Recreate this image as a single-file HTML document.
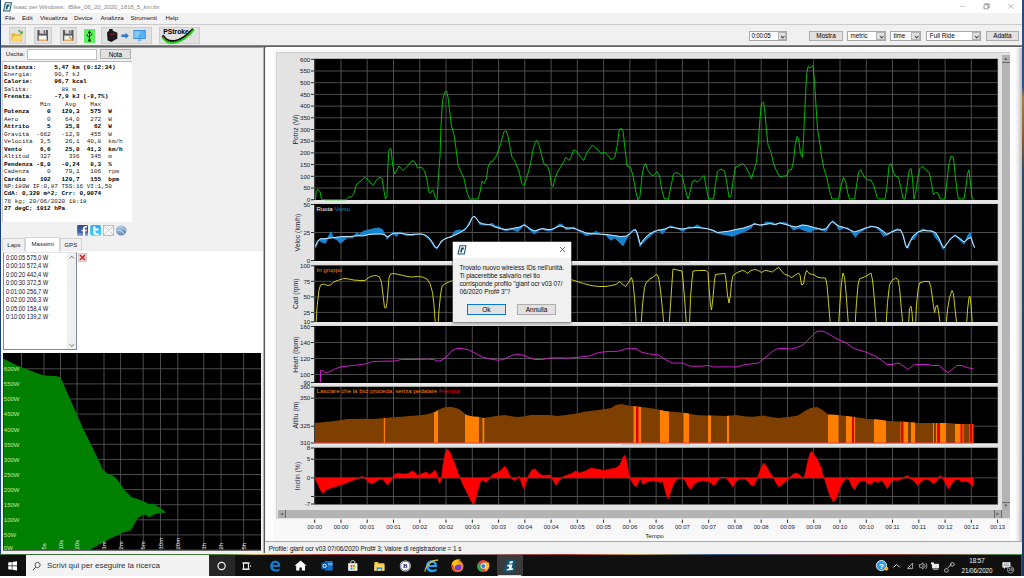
<!DOCTYPE html>
<html><head><meta charset="utf-8"><title>Isaac per Windows</title>
<style>
html,body{margin:0;padding:0}
body{width:1024px;height:578px;overflow:hidden;position:relative;background:#f0f0f0;font-family:"Liberation Sans",sans-serif;font-size:6.4px;color:#000}
.a{position:absolute}
.ax{font-family:"Liberation Sans",sans-serif;font-size:6.2px;fill:#1a1a2a}
.xl{font-family:"Liberation Sans",sans-serif;font-size:5.9px;fill:#1a1a3a}
.lg{font-family:"Liberation Sans",sans-serif;font-size:6.1px}
.at{font-family:"Liberation Sans",sans-serif;font-size:6.8px;fill:#1a1a3a}
.pl{font-family:"Liberation Sans",sans-serif;font-size:6px}
svg.chart{position:absolute;left:0;top:0}
svg.pc{position:absolute;left:0;top:352px}
.btn{position:absolute;background:#e1e1e1;border:0.6px solid #cdcdcd;box-sizing:border-box}
.mi{position:absolute;top:14.4px;font-size:6.15px;color:#1a1020}
pre{margin:0;font-family:"Liberation Mono",monospace;font-size:6px;line-height:7.467px;position:absolute;left:3.9px;top:63.5px;color:#222}
pre b{color:#000}
.li{position:absolute;left:6px;font-size:6.7px;transform:scaleX(.86);transform-origin:0 0;color:#10102a;white-space:pre}
.cb{position:absolute;background:#fff;border:0.6px solid #a8a8a8;box-sizing:border-box;height:9.6px;top:31.2px;font-size:6.3px;line-height:8.2px;padding-left:2.4px}
.cb i{position:absolute;right:0;top:0;bottom:0;width:8.4px;background:#e0e0e0;border:0.5px solid #b4b4b4;box-sizing:border-box}
.cb i:after{content:"";position:absolute;left:2.4px;top:1.8px;width:2.4px;height:2.4px;border-right:0.7px solid #444;border-bottom:0.7px solid #444;transform:rotate(45deg)}
.tb{position:absolute;top:555.1px;left:0;width:1022px;height:20.5px;background:#101010}
.tray{position:absolute;color:#f4f4f4;font-size:6.3px;letter-spacing:-0.05px;text-align:center}
</style></head><body>
<!-- desktop slivers -->
<div class="a" style="left:0;top:0;width:1.2px;height:555px;background:#1c3f7a"></div>
<div class="a" style="left:1022px;top:0;width:2px;height:578px;background:linear-gradient(#244a86 0,#2a5290 15%,#b07a3a 17%,#8a5a2a 24%,#2a4a70 30%,#1c3a66 100%)"></div>
<!-- title bar -->
<div class="a" style="left:1.2px;top:0;width:1020.8px;height:12.6px;background:#fff"></div>
<svg class="a" style="left:3px;top:1.5px" width="9" height="10" viewBox="0 0 9 10"><path d="M2.4 0.8H8.4L6.8 9H0.6Z" fill="#fff" stroke="#1d5672" stroke-width="1.1"/><path d="M3.6 2.4H6.6L6.2 4.4H5L4.4 7.4H2.6L3.2 4.4H3.2Z" fill="#1d5672"/></svg>
<div class="a" style="left:13.2px;top:2.8px;font-size:6.2px;letter-spacing:-0.135px;color:#8a8a8a;white-space:pre">Isaac per Windows:  iBike_06_20_2020_1818_5_km.ibr</div>
<svg class="a" style="left:950px;top:0" width="72" height="13" viewBox="950 0 72 13"><path d="M959.800 6.400H964.800" stroke="#aaa" stroke-width="0.600"/><path d="M984 4.800h4v4h-4zM985.200 4.800V3.700h4v4h-1.200" stroke="#777" stroke-width="0.700" fill="none"/><path d="M1008.400 3.900l4.800 4.800M1013.200 3.900l-4.800 4.800" stroke="#888" stroke-width="0.600"/></svg>
<!-- menu bar -->
<div class="a" style="left:1.2px;top:12.6px;width:1020.8px;height:11.2px;background:#f2f2f2"></div>
<span class="mi" style="left:5px">File</span><span class="mi" style="left:22px">Edit</span><span class="mi" style="left:40px">Visualizza</span><span class="mi" style="left:74px">Device</span><span class="mi" style="left:100.5px">Analizza</span><span class="mi" style="left:130.5px">Strumenti</span><span class="mi" style="left:165.5px">Help</span>
<div class="a" style="left:1px;top:24px;width:1021px;height:1px;background:#cacaca"></div>
<!-- toolbar -->
<div class="btn" style="left:8.5px;top:26.8px;width:17.5px;height:17.6px"></div>
<div class="btn" style="left:34px;top:26.8px;width:17.5px;height:17.6px"></div>
<div class="btn" style="left:59.5px;top:26.8px;width:17.5px;height:17.6px"></div>
<div class="btn" style="left:100.6px;top:26.8px;width:51px;height:17.6px"></div>
<div class="btn" style="left:159.4px;top:26.8px;width:40.4px;height:17.6px"></div>
<div class="a" style="left:84px;top:29px;width:11px;height:13.8px;background:#5cf05c"></div>
<svg class="a" style="left:0;top:24px" width="210" height="22" viewBox="0 24 210 22">
<!-- folder -->
<path d="M11.5 33.2h3.2l1 1h6.3v7.4H11.5z" fill="#e8b83a"/><path d="M11.5 41.6l2-5.6h9.6l-2.6 5.6z" fill="#fbd968"/><path d="M18 31.4h3.4l-0.6-1.6 3 2.4-3 2.4 0.6-1.6H18z" fill="#4cae3c" transform="rotate(35 21 32)"/>
<!-- save -->
<path d="M37.4 30h10.6v10.8H37.4z" fill="#5a5a5e"/><rect x="39.6" y="30" width="6.2" height="3.6" fill="#d8d8dc"/><rect x="43.6" y="30.5" width="1.4" height="2.6" fill="#5a5a5e"/><rect x="38.8" y="35.6" width="7.8" height="5.2" fill="#f4f4f4"/><rect x="38.8" y="39.6" width="7.8" height="1.2" fill="#f0a040"/>
<!-- save as -->
<path d="M62.9 30h10.6v10.8H62.9z" fill="#5a5a5e"/><rect x="65.1" y="30" width="6.2" height="3.6" fill="#d8d8dc"/><rect x="69.1" y="30.5" width="1.4" height="2.6" fill="#5a5a5e"/><rect x="64.3" y="35.6" width="7.8" height="5.2" fill="#f4f4f4"/><rect x="64.3" y="39.6" width="7.8" height="1.2" fill="#f0a040"/><path d="M69 36.5l4 4" stroke="#d89030" stroke-width="1.3"/>
<!-- usb -->
<path d="M89.5 30.6v9.4M89.5 31l-1.2 1.8h2.4zM89.5 37.6l-2.3-1.8v-1.6M89.5 36.4l2.3-1.6v-1.4" stroke="#0a2a0a" stroke-width="0.9" fill="none"/><circle cx="89.5" cy="40.4" r="1.3" fill="#0a2a0a"/>
<!-- device -->
<path d="M107 32.6l2-1.800 0.200-1.800h3.400l0.200 1.800 4.600 2v5.800l-6 3.300-3.800-1.500z" fill="#1a1a1c"/><path d="M109.8 34.6l5.6-0.8" stroke="#c02030" stroke-width="0.8"/>
<path d="M121.4 34.6h4v-1.8l3.6 3-3.6 3v-1.8h-4z" fill="#2a78e0"/>
<rect x="133.4" y="30" width="12.4" height="9" fill="#3a8ee0"/><path d="M134.4 31h10.4v7h-10.4z" fill="#5ab0f4"/><path d="M134.4 31h6l-3 7h-3z" fill="#9ad4fa" opacity=".7"/><path d="M138.4 39h2.4l1 2.2h-4.4z" fill="#7ab8ee"/>
<!-- pstroke -->
<path d="M162.600 35.400c5 9 17 8.600 30.600-6.400" stroke="#101010" stroke-width="2.600" fill="none"/>
<path d="M162.400 37.200c5.600 9 18.600 8 31.600-7.600" stroke="#10d810" stroke-width="1.900" fill="none"/>
<path d="M163 36.400c5 8.400 17.400 8 30.400-7.200" stroke="#ff5a5a" stroke-width="1" stroke-dasharray="0.9 1.700" fill="none"/>
<text x="163.2" y="34.3" font-family="Liberation Sans,sans-serif" font-size="6.8" font-weight="bold" fill="#000">PStroke</text>
</svg>
<div class="a" style="left:1.2px;top:45.4px;width:1020.8px;height:2.4px;background:linear-gradient(#d0d0d0,#5a5a5a 25%,#6a6a6a 65%,#d0d0d0)"></div>
<!-- right toolbar controls -->
<div class="cb" style="left:749px;width:38.4px;padding-left:1.6px;letter-spacing:-0.3px">0:00:05<i></i></div>
<div class="btn" style="left:809.2px;top:31.2px;width:33.6px;height:9.8px;font-size:6.4px;line-height:8.6px;text-align:center;border-color:#adadad">Mostra</div>
<div class="cb" style="left:847.2px;width:38.6px">metric<i></i></div>
<div class="cb" style="left:890px;width:30.6px">time<i></i></div>
<div class="cb" style="left:926.4px;width:54.6px">Full Ride<i></i></div>
<div class="btn" style="left:985.6px;top:31.2px;width:33.6px;height:9.8px;font-size:6.4px;line-height:8.6px;text-align:center;border-color:#adadad">Adatta</div>
<!-- left pane -->
<div class="a" style="left:5.7px;top:50px;font-size:6.2px;color:#222">Uscita:</div>
<div class="a" style="left:26.8px;top:48.8px;width:70.6px;height:10.8px;background:#fff;border:0.6px solid #c0c0c0;box-sizing:border-box"></div>
<div class="btn" style="left:100.2px;top:48.6px;width:30.4px;height:10.6px;font-size:6.4px;line-height:9.4px;text-align:center;border-color:#adadad">Nota</div>
<div class="a" style="left:2px;top:61.4px;width:130px;height:161px;background:#fff;border-top:0.8px solid #b8b8b8;border-left:0.8px solid #c8c8c8;box-sizing:border-box"></div>
<pre><b>Distanza:     5,47 km (0:12:34)</b>
Energia:      90,7 kJ
<b>Calorie:      96,7 kcal</b>
Salita:         88 m
<b>Frenata:      -7,9 kJ (-8,7%)</b>
          Min    Avg    Max
<b>Potenza     0   120,3   575  W</b>
Aero        0    64,0   272  W
<b>Attrito     5    35,8    62  W</b>
Gravità  -662   -12,9   455  W
Velocità  3,5    26,1  40,8  km/h
<b>Vento     6,6    25,0  41,3  km/h</b>
Altitud   327     336   345  m
<b>Pendenza -8,0   -0,24   0,3  %</b>
Cadenza     0    79,1   106  rpm
<b>Cardio    102   120,7   155  bpm</b>
NP:180W IF:0,87 TSS:16 VI:1,50
<b>CdA: 0,320 m^2; Crr: 0,0074</b>
76 kg; 20/06/2020 18:18
<b>27 degC; 1012 hPa</b></pre>
<!-- social icons -->
<svg class="a" style="left:76px;top:224px" width="52" height="14" viewBox="76 224 52 14">
<defs><linearGradient id="fb" x1="0" y1="0" x2="0" y2="1"><stop offset="0" stop-color="#2f4b8c"/><stop offset=".72" stop-color="#4a66a8"/><stop offset=".74" stop-color="#6f88c6"/><stop offset="1" stop-color="#7a92cc"/></linearGradient>
<linearGradient id="tw" x1="0" y1="0" x2="0" y2="1"><stop offset="0" stop-color="#3aa8e8"/><stop offset="1" stop-color="#38d4f4"/></linearGradient>
<radialGradient id="gl" cx=".4" cy=".35" r=".7"><stop offset="0" stop-color="#9cc0e0"/><stop offset="1" stop-color="#5f86aa"/></radialGradient></defs>
<rect x="77.200" y="225" width="10.800" height="10.800" rx="1.200" fill="url(#fb)"/>
<path d="M83 235.800v-4.600h-1.400v-1.500h1.400v-1.100c0-1.700 1-2.600 2.500-2.600 0.600 0 1.200 0.050 1.500 0.100v1.500h-0.900c-0.800 0-1 0.400-1 0.950v1.150h1.800l-0.250 1.500h-1.550v4.600z" fill="#fff"/>
<rect x="90.200" y="225" width="10.800" height="10.800" rx="2" fill="url(#tw)"/>
<path d="M93.300 226.800c0-0.700 2.200-0.700 2.200 0v1.800h2.600c0.900 0 0.900 1.900 0 1.900h-2.600v1.600c0 1 0.500 1.300 1.300 1.300h1.300c0.900 0 0.900 1.900 0 1.900h-1.600c-2 0-3.200-1-3.200-3z" fill="#fff"/>
<rect x="103.400" y="225.600" width="10.200" height="9.800" fill="#fbfbfb" stroke="#a4a4a4" stroke-width="0.700"/><path d="M103.600 226l4.900 4.600 4.900-4.600M103.600 235.200l3.700-3.900M113.400 235.200l-3.700-3.900" stroke="#a8a8a8" stroke-width="0.700" fill="none"/>
<circle cx="121.200" cy="230.400" r="5.200" fill="url(#gl)"/><path d="M116.800 228.200c2.600-2.400 6-1 9.200 2.600M116.200 231c2.800-1.800 5.600-0.400 8 3.200M119 225.800c2.600-0.600 5 0.400 6.800 2.400" stroke="#e4eef8" stroke-width="0.900" fill="none" opacity=".85"/>
</svg>
<!-- tabs -->
<div class="a" style="left:1.2px;top:251.2px;width:262.2px;height:102px;background:#fff"></div>
<div class="a" style="left:2.4px;top:238.4px;width:23px;height:13px;border:0.6px solid #d4d4d4;border-bottom:none;box-sizing:border-box;font-size:6.1px;line-height:12.8px;text-align:center;color:#222">Laps</div>
<div class="a" style="left:60px;top:238.4px;width:21.6px;height:13px;border:0.6px solid #d4d4d4;border-bottom:none;box-sizing:border-box;font-size:6.1px;line-height:12.8px;text-align:center;color:#222">GPS</div>
<div class="a" style="left:24.8px;top:237.2px;width:35.6px;height:14.6px;background:#fff;border:0.6px solid #d4d4d4;border-bottom:none;box-sizing:border-box;font-size:6.1px;line-height:12.4px;text-align:center;color:#222">Massimi</div>
<!-- listbox -->
<div class="a" style="left:2.6px;top:252.4px;width:74px;height:97.6px;background:#fff;border:0.7px solid #7a8a9a;border-top:0.5px solid #e0e4e8;box-sizing:border-box"></div>
<div class="a" style="left:67.4px;top:253px;width:8.6px;height:96.4px;background:#f0f0f0"></div>
<svg class="a" style="left:67px;top:253px" width="10" height="97" viewBox="0 0 10 97"><path d="M2.6 5.4l2.2-2.2 2.2 2.2M2.6 91.2l2.2 2.2 2.2-2.2" stroke="#505050" stroke-width="0.8" fill="none"/></svg>
<div class="li" style="top:254px">0:00:05 575,0 W</div>
<div class="li" style="top:262.45px">0:00:10 572,4 W</div>
<div class="li" style="top:270.9px">0:00:20 442,4 W</div>
<div class="li" style="top:279.35px">0:00:30 372,5 W</div>
<div class="li" style="top:287.8px">0:01:00 256,7 W</div>
<div class="li" style="top:296.25px">0:02:00 206,3 W</div>
<div class="li" style="top:304.7px">0:05:00 158,4 W</div>
<div class="li" style="top:313.15px">0:10:00 139,2 W</div>
<div class="btn" style="left:77.6px;top:252.6px;width:9px;height:9px;background:#e4e4e4"></div>
<svg class="a" style="left:77.6px;top:252.6px" width="9" height="9" viewBox="0 0 9 9"><path d="M2 2l5 5M7 2l-5 5" stroke="#e02020" stroke-width="1.6"/></svg>
<svg class="pc" width="262" height="200" viewBox="0 352 262 200">
<rect x="3" y="353" width="258" height="197.5" fill="#000"/>
<path d="M21.5 353V550M44.0 353V550M60.5 353V550M77.0 353V550M104.0 353V550M120.6 353V550M143.2 353V550M160.5 353V550M177.8 353V550M203.7 353V550M221.0 353V550M243.6 353V550M3 368.8H261M3 383.9H261M3 399.0H261M3 414.1H261M3 429.2H261M3 444.3H261M3 459.4H261M3 474.5H261M3 489.6H261M3 504.7H261M3 519.8H261M3 534.9H261M3 550.0H261" stroke="#585858" stroke-width="0.85" fill="none"/>
<path d="M3.3 358.6 L19.0 366.2 L42.9 375.3 L57.0 376.3 L60.6 377.6 L68.6 395.7 L76.2 412.9 L83.8 430.0 L93.7 450.0 L103.0 469.8 L106.9 473.2 L113.5 475.9 L117.4 479.6 L124.0 489.6 L131.9 497.5 L137.2 498.8 L143.8 501.5 L149.0 504.0 L153.0 503.6 L158.3 506.7 L162.3 509.4 L166.2 512.8 L161.0 512.8 L154.4 514.6 L149.0 517.3 L145.1 514.6 L141.2 516.0 L137.2 518.6 L134.6 523.9 L130.6 530.5 L124.0 532.3 L116.1 535.8 L105.5 541.0 L97.6 545.5 L89.7 550.0 L3.3 550.0 Z" fill="#008000"/>
<text x="3.8" y="371.1" class="pl" fill="#c8e890">600W</text>
<text x="3.8" y="386.2" class="pl" fill="#c8e890">550W</text>
<text x="3.8" y="401.3" class="pl" fill="#c8e890">500W</text>
<text x="3.8" y="416.4" class="pl" fill="#c8e890">450W</text>
<text x="3.8" y="431.5" class="pl" fill="#c8e890">400W</text>
<text x="3.8" y="446.6" class="pl" fill="#c8e890">350W</text>
<text x="3.8" y="461.7" class="pl" fill="#c8e890">300W</text>
<text x="3.8" y="476.8" class="pl" fill="#c8e890">250W</text>
<text x="3.8" y="491.9" class="pl" fill="#c8e890">200W</text>
<text x="3.8" y="507.0" class="pl" fill="#c8e890">150W</text>
<text x="3.8" y="522.1" class="pl" fill="#c8e890">100W</text>
<text x="3.8" y="537.2" class="pl" fill="#c8e890">50W</text>
<text x="3.8" y="549.5" class="pl" fill="#c8e890">0W</text>
<text transform="translate(46.2 549.5) rotate(-90)" class="pl" fill="#e8e8e8">5s</text>
<text transform="translate(62.7 549.5) rotate(-90)" class="pl" fill="#e8e8e8">10s</text>
<text transform="translate(79.2 549.5) rotate(-90)" class="pl" fill="#e8e8e8">20s</text>
<text transform="translate(106.2 549.5) rotate(-90)" class="pl" fill="#e8e8e8">1m</text>
<text transform="translate(122.8 549.5) rotate(-90)" class="pl" fill="#e8e8e8">2m</text>
<text transform="translate(145.4 549.5) rotate(-90)" class="pl" fill="#e8e8e8">5m</text>
<text transform="translate(162.7 549.5) rotate(-90)" class="pl" fill="#e8e8e8">10m</text>
<text transform="translate(180.0 549.5) rotate(-90)" class="pl" fill="#e8e8e8">20m</text>
<text transform="translate(205.9 549.5) rotate(-90)" class="pl" fill="#e8e8e8">1h</text>
<text transform="translate(223.2 549.5) rotate(-90)" class="pl" fill="#e8e8e8">2h</text>
<text transform="translate(245.8 549.5) rotate(-90)" class="pl" fill="#e8e8e8">5h</text>
</svg>
<!-- splitter -->
<div class="a" style="left:262.6px;top:47.4px;width:0.8px;height:506px;background:#b4b4b4"></div>
<div class="a" style="left:263.8px;top:47.4px;width:1.5px;height:506px;background:#5a5a5a"></div>
<!-- right pane -->
<div class="a" style="left:266px;top:47px;width:756px;height:495px;background:#fff"></div>
<div class="a" style="left:273px;top:49px;width:737px;height:492px;background:#f8f8f8"></div>
<div class="a" style="left:1015px;top:48px;width:7px;height:493px;background:linear-gradient(90deg,#fff,#e8e8e8 45%,#bcbcbc)"></div>
<div class="a" style="left:276px;top:52px;width:734px;height:467px;background:#e3e3e3;border-top:1px solid #cdcdcd;border-left:1px solid #d0d0d0;box-sizing:border-box"></div>
<!-- scrollbars -->
<div class="a" style="left:1002px;top:54.6px;width:7.6px;height:455.3px;background:#b4b4b4"></div>
<div class="a" style="left:1002px;top:54.6px;width:7.6px;height:8px;background:#b0b0b0;border-bottom:0.7px solid #6a6a6a;box-sizing:border-box"></div>
<div class="a" style="left:1002px;top:501.6px;width:7.6px;height:8px;background:#b0b0b0;border-top:0.7px solid #6a6a6a;box-sizing:border-box"></div>
<div class="a" style="left:278px;top:509.9px;width:731.6px;height:8px;background:#b4b4b4"></div>
<div class="a" style="left:278px;top:509.9px;width:8px;height:8px;background:#acacac;border-right:0.7px solid #6a6a6a;box-sizing:border-box"></div>
<div class="a" style="left:993.6px;top:509.9px;width:8.2px;height:8px;background:#acacac;border-left:0.7px solid #6a6a6a;border-right:0.7px solid #6a6a6a;box-sizing:border-box"></div>
<svg class="a" style="left:0;top:0;pointer-events:none" width="1024" height="578" viewBox="0 0 1024 578"><path d="M1004.4 60l1.4-2.8 1.4 2.8zM1004.4 504.4l1.4 2.8 1.4-2.8zM283.2 512.4l-2.8 1.5 2.8 1.5zM996.4 512.4l2.8 1.5-2.8 1.5z" fill="#606060"/></svg>
<svg class="chart" width="1024" height="578" viewBox="0 0 1024 578">
<rect x="314.0" y="58.8" width="684.0" height="141.4" fill="#000"/>
<rect x="314.0" y="204.0" width="684.0" height="57.0" fill="#000"/>
<rect x="314.0" y="265.2" width="684.0" height="57.0" fill="#000"/>
<rect x="314.0" y="326.0" width="684.0" height="57.0" fill="#000"/>
<rect x="314.0" y="386.5" width="684.0" height="57.0" fill="#000"/>
<rect x="314.0" y="447.5" width="684.0" height="57.0" fill="#000"/>
<defs><linearGradient id="sg" x1="0" y1="0" x2="0" y2="1"><stop offset="0" stop-color="#f2f2f2"/><stop offset="1" stop-color="#d6d6d6"/></linearGradient></defs>
<rect x="314.0" y="200.2" width="684.0" height="3.8" fill="url(#sg)"/>
<rect x="314.0" y="261.0" width="684.0" height="4.2" fill="url(#sg)"/>
<path d="M621 262.3H690.3" stroke="#b4b4b4" stroke-width="0.7"/>
<rect x="314.0" y="322.2" width="684.0" height="3.8" fill="url(#sg)"/>
<path d="M621 323.6H690.3" stroke="#b4b4b4" stroke-width="0.7"/>
<rect x="314.0" y="383.0" width="684.0" height="3.5" fill="url(#sg)"/>
<path d="M621 384.3H690.3" stroke="#b4b4b4" stroke-width="0.7"/>
<rect x="314.0" y="443.5" width="684.0" height="4.0" fill="url(#sg)"/>
<path d="M621 444.8H690.3" stroke="#b4b4b4" stroke-width="0.7"/>
<path d="M314.7 59.3V199.7M341.0 59.3V199.7M367.2 59.3V199.7M393.5 59.3V199.7M419.8 59.3V199.7M446.0 59.3V199.7M472.3 59.3V199.7M498.6 59.3V199.7M524.8 59.3V199.7M551.1 59.3V199.7M577.3 59.3V199.7M603.6 59.3V199.7M629.9 59.3V199.7M656.1 59.3V199.7M682.4 59.3V199.7M708.7 59.3V199.7M734.9 59.3V199.7M761.2 59.3V199.7M787.5 59.3V199.7M813.7 59.3V199.7M840.0 59.3V199.7M866.3 59.3V199.7M892.5 59.3V199.7M918.8 59.3V199.7M945.1 59.3V199.7M971.3 59.3V199.7M997.6 59.3V199.7M314.0 71.0H998.0M314.0 82.7H998.0M314.0 94.4H998.0M314.0 106.1H998.0M314.0 117.8H998.0M314.0 129.5H998.0M314.0 141.2H998.0M314.0 152.9H998.0M314.0 164.6H998.0M314.0 176.3H998.0M314.0 188.0H998.0" stroke="#5a5a5a" stroke-width="0.85" fill="none"/>
<path d="M315.5 199.8 L316.0 193.0 L317.5 189.2 L320.0 191.5 L321.5 199.0 L325.0 199.8 L346.2 199.8 L348.8 196.5 L351.2 197.2 L353.8 194.0 L356.2 184.8 L358.8 182.2 L361.2 181.0 L364.5 177.0 L368.0 179.8 L373.0 185.5 L376.2 180.2 L380.0 177.2 L382.0 178.5 L384.0 191.0 L385.5 199.0 L387.0 196.0 L388.0 163.5 L389.0 149.8 L391.0 148.5 L392.5 163.5 L394.5 174.0 L397.0 169.8 L399.0 166.0 L403.0 170.5 L407.5 166.0 L412.5 160.5 L415.0 162.2 L417.5 168.0 L421.2 167.2 L424.5 171.0 L427.0 179.8 L429.0 192.2 L430.5 193.5 L432.0 190.5 L433.5 191.0 L435.0 197.2 L437.0 199.8 L438.5 176.0 L440.0 156.0 L441.0 126.0 L442.5 101.0 L444.5 93.0 L446.5 91.0 L448.0 97.2 L449.5 109.8 L451.5 126.0 L454.0 134.8 L456.0 148.5 L458.0 164.8 L461.0 172.2 L464.0 178.5 L467.0 192.2 L469.5 199.0 L478.0 199.0 L480.0 192.2 L482.0 181.0 L484.0 183.5 L486.5 178.5 L488.0 167.2 L490.0 162.2 L493.0 161.0 L496.2 156.0 L500.0 146.0 L503.8 132.2 L506.0 130.5 L508.0 136.0 L510.0 147.2 L512.0 157.2 L515.5 162.2 L518.8 171.0 L522.0 183.5 L524.0 185.5 L526.5 178.5 L530.0 166.0 L533.0 149.8 L535.0 142.2 L537.0 140.5 L539.0 144.8 L541.5 154.8 L544.0 164.0 L547.5 166.0 L549.5 172.2 L551.5 184.8 L553.0 186.5 L555.0 178.5 L558.0 171.0 L561.2 166.0 L566.0 157.2 L569.0 160.5 L571.5 156.0 L573.5 149.8 L576.0 151.0 L579.8 156.0 L583.5 160.5 L587.2 152.2 L592.2 145.2 L596.0 148.0 L601.0 153.5 L604.8 152.2 L608.5 156.0 L611.5 159.8 L614.8 157.2 L617.2 146.0 L619.0 131.0 L621.0 128.0 L623.0 131.0 L625.0 148.5 L627.0 166.0 L630.5 167.2 L633.0 176.0 L636.0 192.2 L638.0 199.8 L640.0 196.0 L642.0 176.0 L644.0 166.0 L645.5 163.5 L647.5 169.8 L651.0 174.8 L653.5 175.5 L657.0 171.5 L659.5 176.0 L662.0 191.0 L664.5 199.0 L668.5 199.0 L671.0 186.0 L673.5 174.0 L676.0 172.5 L679.8 174.0 L682.5 177.2 L685.0 188.5 L688.0 199.0 L690.0 192.2 L692.5 181.0 L695.0 180.5 L697.5 182.2 L701.0 178.5 L704.0 175.5 L706.0 186.0 L708.5 199.0 L713.5 199.0 L715.5 183.5 L717.5 171.5 L721.0 169.0 L724.5 171.0 L726.5 181.0 L729.0 197.2 L731.0 196.0 L733.0 181.0 L735.5 167.2 L738.5 166.0 L742.5 163.5 L746.0 167.2 L748.5 172.2 L751.5 178.5 L754.0 169.8 L756.5 162.2 L758.0 146.0 L760.0 118.5 L761.5 103.5 L763.5 102.2 L765.0 113.5 L766.5 131.0 L768.0 144.8 L771.0 152.2 L773.5 163.5 L776.5 171.0 L780.0 177.2 L783.5 176.0 L786.5 176.0 L789.0 169.8 L791.5 169.8 L793.5 161.0 L795.0 146.0 L797.0 136.5 L798.5 138.5 L800.5 153.5 L802.5 157.2 L803.5 138.5 L805.0 106.0 L806.5 76.0 L808.0 66.5 L810.0 68.0 L813.0 65.5 L814.5 81.0 L816.0 106.0 L817.5 128.5 L819.5 141.0 L821.5 156.0 L823.5 167.2 L827.0 178.5 L829.5 191.0 L832.0 199.0 L838.5 199.0 L841.0 186.0 L843.5 177.2 L845.5 181.0 L847.5 192.2 L849.5 199.0 L854.5 199.0 L856.5 186.0 L858.5 172.2 L860.5 169.8 L863.0 174.8 L866.8 179.8 L871.0 180.2 L874.0 186.0 L877.0 197.2 L878.5 199.0 L885.0 199.0 L887.0 186.0 L889.0 166.0 L891.0 163.5 L893.0 171.0 L895.5 176.0 L898.5 177.2 L901.0 188.5 L903.0 198.5 L905.0 199.0 L907.0 186.0 L909.0 171.0 L911.0 168.5 L912.5 178.5 L914.0 199.0 L916.0 191.0 L918.0 176.0 L920.0 168.5 L922.5 166.0 L925.5 169.8 L929.2 172.2 L931.5 183.5 L933.5 194.8 L936.0 192.2 L938.0 193.0 L940.0 199.0 L945.0 199.0 L947.0 181.0 L949.0 163.5 L951.0 156.0 L953.5 157.2 L955.0 173.5 L957.0 191.0 L958.5 199.0 L964.0 199.0 L966.0 186.0 L967.5 173.5 L969.0 169.8 L970.5 183.5 L972.0 197.2 L973.5 199.8" stroke="#00d800" stroke-width="0.85" fill="none" stroke-linejoin="round"/>
<path d="M314.7 204.5V260.5M341.0 204.5V260.5M367.2 204.5V260.5M393.5 204.5V260.5M419.8 204.5V260.5M446.0 204.5V260.5M472.3 204.5V260.5M498.6 204.5V260.5M524.8 204.5V260.5M551.1 204.5V260.5M577.3 204.5V260.5M603.6 204.5V260.5M629.9 204.5V260.5M656.1 204.5V260.5M682.4 204.5V260.5M708.7 204.5V260.5M734.9 204.5V260.5M761.2 204.5V260.5M787.5 204.5V260.5M813.7 204.5V260.5M840.0 204.5V260.5M866.3 204.5V260.5M892.5 204.5V260.5M918.8 204.5V260.5M945.1 204.5V260.5M971.3 204.5V260.5M997.6 204.5V260.5M314.0 232.5H998.0" stroke="#5a5a5a" stroke-width="0.85" fill="none"/>
<path d="M315.5 246.2 L317.5 241.2 L320.5 238.8 L325.0 238.8 L330.0 238.0 L335.0 237.5 L342.5 236.5 L350.0 236.5 L357.5 235.8 L363.8 235.8 L368.8 234.5 L375.0 234.0 L381.2 234.0 L385.0 235.0 L387.5 237.0 L391.2 234.5 L395.0 233.0 L400.0 233.2 L405.0 234.0 L410.0 234.5 L415.0 234.2 L421.2 234.0 L425.0 235.0 L428.8 237.5 L432.5 242.5 L435.0 247.0 L437.0 248.0 L439.0 245.0 L441.2 241.2 L445.0 238.8 L450.0 237.0 L455.0 235.0 L460.0 232.5 L465.0 229.5 L468.8 225.0 L472.0 218.0 L474.0 216.2 L476.0 218.0 L478.8 222.0 L482.5 223.8 L487.5 224.5 L491.2 225.0 L495.0 227.0 L500.0 228.5 L505.0 229.5 L510.0 229.0 L515.0 228.0 L520.0 227.0 L524.0 225.0 L527.5 227.0 L531.2 229.5 L535.0 231.0 L538.8 229.5 L542.5 228.5 L547.5 229.5 L551.2 229.5 L556.2 227.5 L560.0 225.8 L563.8 227.0 L566.0 228.0 L571.0 228.0 L576.0 229.0 L581.0 231.0 L586.0 233.0 L591.0 233.8 L598.5 234.0 L606.0 234.5 L613.5 235.5 L619.8 236.5 L626.0 236.2 L629.8 233.8 L633.0 230.5 L635.5 229.5 L637.5 233.8 L639.0 240.0 L640.5 244.5 L642.5 241.2 L645.5 237.5 L649.8 233.8 L654.8 231.2 L659.8 230.0 L664.8 229.0 L669.8 227.0 L676.0 228.0 L682.2 229.0 L688.5 228.0 L696.0 227.5 L702.2 228.0 L708.5 229.0 L713.5 230.5 L717.2 232.5 L722.2 232.0 L728.5 231.2 L736.0 229.5 L743.5 228.0 L749.8 226.0 L754.8 224.0 L759.8 225.0 L764.8 224.5 L769.8 223.5 L774.8 224.5 L779.8 223.0 L786.0 224.5 L791.0 226.0 L796.0 227.0 L802.2 225.0 L807.2 225.5 L813.5 227.5 L818.5 228.5 L822.0 229.5 L826.0 228.8 L829.5 224.0 L832.5 221.5 L835.5 224.0 L839.2 226.2 L844.2 227.5 L849.2 229.5 L854.2 232.0 L859.2 230.5 L865.5 228.0 L871.8 226.5 L878.0 227.5 L883.0 231.2 L886.8 234.5 L891.8 232.0 L896.8 230.0 L900.5 230.0 L903.0 235.0 L905.5 245.0 L907.0 248.0 L909.5 242.5 L913.0 236.2 L918.0 232.0 L923.0 230.5 L930.5 231.0 L935.5 232.5 L939.2 238.8 L942.5 246.2 L944.2 248.0 L946.8 243.8 L950.5 238.8 L955.0 235.5 L959.2 238.0 L964.2 242.0 L968.0 238.8 L971.0 237.5 L973.0 243.8 L974.5 247.5 L974.5 247.5 L972.0 240.0 L970.0 232.5 L967.5 236.2 L964.2 243.8 L959.2 239.5 L955.0 235.0 L950.0 239.5 L946.0 244.5 L943.0 249.0 L940.0 242.5 L935.5 237.5 L931.8 230.5 L928.0 231.0 L923.0 229.0 L918.0 232.5 L914.2 238.8 L911.0 240.0 L908.0 248.0 L906.0 246.2 L903.5 236.2 L900.5 229.5 L896.8 229.0 L891.8 231.2 L888.0 234.5 L883.5 236.2 L880.5 231.2 L875.5 227.0 L870.5 226.0 L864.2 229.5 L859.2 232.5 L855.5 237.0 L851.8 232.5 L848.0 228.0 L843.0 228.0 L839.2 230.0 L835.5 223.0 L832.5 221.0 L829.5 225.0 L826.0 231.2 L822.0 230.5 L819.8 229.5 L814.8 229.5 L809.8 232.0 L803.5 230.0 L798.5 228.0 L793.5 230.0 L789.8 226.0 L786.0 223.0 L780.5 222.5 L776.0 225.0 L772.2 222.5 L766.0 222.0 L762.2 226.0 L758.5 225.0 L754.0 223.0 L751.0 228.0 L744.8 231.2 L738.5 233.8 L732.2 236.2 L724.8 234.5 L718.5 233.5 L713.5 231.2 L708.5 229.0 L701.0 227.5 L697.2 225.0 L693.5 227.5 L688.5 227.0 L683.0 231.2 L676.0 228.0 L670.5 226.0 L666.0 229.5 L662.2 233.8 L659.0 229.5 L654.8 232.0 L651.0 235.0 L646.0 239.5 L642.5 243.0 L640.0 246.5 L638.0 237.5 L636.0 231.2 L633.5 230.0 L630.5 232.5 L626.5 238.8 L623.0 245.5 L618.5 241.2 L614.8 237.5 L611.0 240.0 L606.0 235.0 L599.8 234.0 L596.0 231.5 L591.0 234.5 L586.0 235.5 L581.0 232.0 L577.2 230.0 L573.5 227.0 L569.8 229.0 L566.0 229.5 L562.5 225.0 L560.0 224.0 L556.2 227.0 L552.5 230.0 L548.8 231.0 L545.0 230.0 L541.2 229.0 L537.5 231.2 L534.5 233.8 L531.2 231.2 L527.5 227.5 L524.5 223.8 L521.2 228.0 L517.5 231.5 L513.8 230.0 L510.0 229.5 L506.2 231.0 L502.5 229.5 L498.8 226.5 L495.0 226.0 L492.0 223.5 L487.5 225.0 L483.8 225.0 L480.0 224.5 L477.5 220.0 L475.0 216.5 L472.5 217.0 L470.0 221.2 L466.2 228.0 L462.5 230.5 L458.8 230.0 L455.0 231.2 L451.2 237.5 L447.5 237.5 L443.8 239.5 L440.0 243.8 L437.0 248.8 L433.8 246.2 L430.0 240.0 L425.0 235.5 L420.0 233.5 L412.5 235.5 L407.5 235.5 L403.8 234.5 L400.0 232.0 L396.2 236.2 L393.0 232.0 L390.0 236.2 L387.0 238.8 L385.0 235.0 L382.5 230.0 L378.8 228.0 L373.8 228.8 L368.8 230.0 L363.8 231.2 L359.0 235.0 L357.0 232.5 L352.5 238.0 L347.5 237.5 L343.8 240.0 L340.5 243.0 L337.5 240.0 L333.0 237.5 L331.0 232.0 L328.0 237.5 L325.5 243.0 L322.5 242.5 L318.8 240.0 L315.5 247.5 Z" fill="#1585d0" stroke="#1585d0" stroke-width="1.1" stroke-linejoin="round"/>
<path d="M315.5 246.2 L317.5 241.2 L320.5 238.8 L325.0 238.8 L330.0 238.0 L335.0 237.5 L342.5 236.5 L350.0 236.5 L357.5 235.8 L363.8 235.8 L368.8 234.5 L375.0 234.0 L381.2 234.0 L385.0 235.0 L387.5 237.0 L391.2 234.5 L395.0 233.0 L400.0 233.2 L405.0 234.0 L410.0 234.5 L415.0 234.2 L421.2 234.0 L425.0 235.0 L428.8 237.5 L432.5 242.5 L435.0 247.0 L437.0 248.0 L439.0 245.0 L441.2 241.2 L445.0 238.8 L450.0 237.0 L455.0 235.0 L460.0 232.5 L465.0 229.5 L468.8 225.0 L472.0 218.0 L474.0 216.2 L476.0 218.0 L478.8 222.0 L482.5 223.8 L487.5 224.5 L491.2 225.0 L495.0 227.0 L500.0 228.5 L505.0 229.5 L510.0 229.0 L515.0 228.0 L520.0 227.0 L524.0 225.0 L527.5 227.0 L531.2 229.5 L535.0 231.0 L538.8 229.5 L542.5 228.5 L547.5 229.5 L551.2 229.5 L556.2 227.5 L560.0 225.8 L563.8 227.0 L566.0 228.0 L571.0 228.0 L576.0 229.0 L581.0 231.0 L586.0 233.0 L591.0 233.8 L598.5 234.0 L606.0 234.5 L613.5 235.5 L619.8 236.5 L626.0 236.2 L629.8 233.8 L633.0 230.5 L635.5 229.5 L637.5 233.8 L639.0 240.0 L640.5 244.5 L642.5 241.2 L645.5 237.5 L649.8 233.8 L654.8 231.2 L659.8 230.0 L664.8 229.0 L669.8 227.0 L676.0 228.0 L682.2 229.0 L688.5 228.0 L696.0 227.5 L702.2 228.0 L708.5 229.0 L713.5 230.5 L717.2 232.5 L722.2 232.0 L728.5 231.2 L736.0 229.5 L743.5 228.0 L749.8 226.0 L754.8 224.0 L759.8 225.0 L764.8 224.5 L769.8 223.5 L774.8 224.5 L779.8 223.0 L786.0 224.5 L791.0 226.0 L796.0 227.0 L802.2 225.0 L807.2 225.5 L813.5 227.5 L818.5 228.5 L822.0 229.5 L826.0 228.8 L829.5 224.0 L832.5 221.5 L835.5 224.0 L839.2 226.2 L844.2 227.5 L849.2 229.5 L854.2 232.0 L859.2 230.5 L865.5 228.0 L871.8 226.5 L878.0 227.5 L883.0 231.2 L886.8 234.5 L891.8 232.0 L896.8 230.0 L900.5 230.0 L903.0 235.0 L905.5 245.0 L907.0 248.0 L909.5 242.5 L913.0 236.2 L918.0 232.0 L923.0 230.5 L930.5 231.0 L935.5 232.5 L939.2 238.8 L942.5 246.2 L944.2 248.0 L946.8 243.8 L950.5 238.8 L955.0 235.5 L959.2 238.0 L964.2 242.0 L968.0 238.8 L971.0 237.5 L973.0 243.8 L974.5 247.5" stroke="#fff" stroke-width="0.8" fill="none"/>
<path d="M314.7 265.8V321.8M341.0 265.8V321.8M367.2 265.8V321.8M393.5 265.8V321.8M419.8 265.8V321.8M446.0 265.8V321.8M472.3 265.8V321.8M498.6 265.8V321.8M524.8 265.8V321.8M551.1 265.8V321.8M577.3 265.8V321.8M603.6 265.8V321.8M629.9 265.8V321.8M656.1 265.8V321.8M682.4 265.8V321.8M708.7 265.8V321.8M734.9 265.8V321.8M761.2 265.8V321.8M787.5 265.8V321.8M813.7 265.8V321.8M840.0 265.8V321.8M866.3 265.8V321.8M892.5 265.8V321.8M918.8 265.8V321.8M945.1 265.8V321.8M971.3 265.8V321.8M997.6 265.8V321.8M314.0 281.3H998.0M314.0 296.9H998.0M314.0 312.4H998.0" stroke="#5a5a5a" stroke-width="0.85" fill="none"/>
<clipPath id="c3"><rect x="314" y="265.8" width="684" height="56.0"/></clipPath>
<path clip-path="url(#c3)" d="M316.0 326.0 L317.0 307.5 L319.0 290.0 L320.5 285.0 L323.8 284.0 L327.5 285.5 L330.5 285.0 L333.8 282.0 L338.8 280.0 L343.8 278.5 L348.8 279.0 L353.8 280.0 L360.0 280.5 L365.0 280.5 L368.8 277.5 L372.5 276.0 L376.2 275.5 L379.5 277.0 L381.5 282.5 L383.0 295.0 L384.5 307.5 L386.0 308.0 L387.0 302.5 L388.0 290.0 L389.0 277.5 L390.5 274.0 L393.8 273.5 L398.8 274.5 L405.0 276.0 L411.2 277.0 L417.5 276.5 L422.5 277.0 L427.0 279.0 L430.0 283.8 L432.5 292.5 L434.0 305.0 L435.5 326.0 L438.0 326.0 L439.0 310.0 L440.5 295.0 L442.0 286.2 L445.0 283.8 L448.8 282.0 L452.5 280.5 L485.0 279.0 L535.0 278.5 L571.0 279.5 L577.2 281.5 L583.5 283.5 L591.0 285.5 L598.5 286.5 L606.0 286.5 L611.0 285.5 L616.0 284.5 L619.8 281.5 L622.2 284.0 L625.5 286.5 L628.5 282.5 L631.5 277.5 L633.0 282.5 L634.5 297.5 L636.5 326.0 L641.0 326.0 L642.5 305.0 L644.5 287.5 L646.0 283.0 L649.8 278.8 L653.5 277.0 L656.5 274.0 L658.5 277.0 L660.5 290.0 L662.5 310.0 L664.0 326.0 L669.0 326.0 L670.5 305.0 L672.0 282.5 L673.0 269.0 L677.2 270.0 L682.0 271.0 L683.0 280.0 L684.5 297.5 L686.5 326.0 L689.5 326.0 L690.5 297.5 L692.0 280.0 L693.0 271.0 L698.5 270.5 L706.0 270.5 L708.0 272.5 L709.0 287.5 L710.5 305.0 L711.5 310.0 L713.0 297.5 L714.5 280.0 L715.5 274.5 L719.8 274.0 L725.0 273.5 L726.0 280.0 L727.5 295.0 L729.0 303.0 L730.5 295.0 L731.5 282.5 L733.0 275.5 L737.2 272.5 L742.2 270.5 L744.8 271.0 L747.2 273.5 L751.0 270.5 L754.8 269.5 L758.5 270.5 L761.5 272.5 L764.8 270.5 L768.5 271.0 L772.2 272.0 L776.0 269.0 L779.0 267.5 L781.5 271.0 L784.8 274.5 L788.5 275.5 L791.5 277.5 L794.8 275.5 L798.5 273.0 L800.0 275.0 L801.5 285.0 L803.5 284.0 L805.0 275.0 L806.5 270.5 L809.8 274.0 L813.5 274.5 L817.2 277.0 L822.0 278.0 L825.5 278.0 L827.0 285.0 L828.5 302.5 L830.5 326.0 L838.5 326.0 L840.0 302.5 L841.5 282.5 L843.0 273.0 L844.5 277.5 L846.0 292.5 L848.5 326.0 L855.0 326.0 L856.5 302.5 L858.0 285.0 L859.5 278.8 L864.2 277.0 L868.0 275.0 L871.0 273.0 L872.5 280.0 L874.0 295.0 L876.5 326.0 L886.0 326.0 L887.5 302.5 L889.5 285.0 L891.8 280.5 L895.5 278.0 L898.0 279.5 L899.5 287.5 L901.0 305.0 L903.0 326.0 L908.5 326.0 L909.5 308.8 L911.0 306.2 L912.0 312.5 L913.0 326.0 L915.5 326.0 L916.5 305.0 L918.0 290.0 L919.5 283.0 L924.2 281.5 L929.2 281.5 L931.0 287.5 L933.0 302.5 L934.5 312.5 L936.0 306.2 L937.5 305.5 L939.0 315.0 L940.5 326.0 L946.0 326.0 L947.5 310.0 L949.5 297.5 L952.0 290.5 L953.5 293.8 L955.0 308.8 L957.0 326.0 L966.5 326.0 L967.5 310.0 L969.0 297.5 L970.0 296.2 L971.0 305.0 L972.5 326.0" stroke="#e0e020" stroke-width="0.9" fill="none" stroke-linejoin="round"/>
<path d="M314.7 326.5V382.5M341.0 326.5V382.5M367.2 326.5V382.5M393.5 326.5V382.5M419.8 326.5V382.5M446.0 326.5V382.5M472.3 326.5V382.5M498.6 326.5V382.5M524.8 326.5V382.5M551.1 326.5V382.5M577.3 326.5V382.5M603.6 326.5V382.5M629.9 326.5V382.5M656.1 326.5V382.5M682.4 326.5V382.5M708.7 326.5V382.5M734.9 326.5V382.5M761.2 326.5V382.5M787.5 326.5V382.5M813.7 326.5V382.5M840.0 326.5V382.5M866.3 326.5V382.5M892.5 326.5V382.5M918.8 326.5V382.5M945.1 326.5V382.5M971.3 326.5V382.5M997.6 326.5V382.5M314.0 342.5H998.0M314.0 358.5H998.0M314.0 374.5H998.0" stroke="#5a5a5a" stroke-width="0.85" fill="none"/>
<path d="M320.5 382.5 L320.5 370.5 L322.5 370.5 L325.0 372.5 L328.8 372.0 L333.8 369.5 L340.0 367.0 L347.5 366.0 L357.5 365.0 L367.5 363.5 L372.5 361.5 L385.0 361.2 L395.0 361.0 L401.2 359.5 L415.0 359.5 L427.5 359.2 L433.8 359.5 L437.5 361.2 L441.2 360.5 L446.2 357.0 L451.2 351.2 L456.2 348.5 L462.5 348.5 L468.8 350.0 L475.0 353.0 L482.5 357.0 L490.0 359.0 L497.5 360.2 L503.8 359.5 L510.0 356.2 L516.2 354.2 L522.5 355.0 L528.8 357.5 L535.0 359.5 L542.5 359.5 L550.0 358.0 L560.0 357.8 L566.0 358.2 L576.0 357.5 L588.5 356.2 L598.5 352.5 L608.5 351.5 L618.5 351.2 L626.0 348.8 L636.0 348.5 L641.0 352.0 L648.5 353.8 L658.5 355.0 L666.0 360.0 L672.2 363.0 L683.5 363.2 L689.8 366.2 L701.0 366.2 L708.5 365.5 L713.5 367.0 L728.5 366.8 L736.0 367.0 L746.0 364.5 L758.5 363.0 L766.0 357.0 L773.5 350.5 L778.5 348.5 L786.0 348.5 L789.8 349.2 L796.0 348.0 L803.5 344.5 L809.8 338.0 L816.0 332.0 L816.0 332.0 L819.2 331.0 L824.2 331.5 L830.5 335.0 L838.0 339.5 L845.5 342.5 L854.2 348.5 L865.5 352.0 L875.5 356.2 L881.8 360.5 L886.8 364.5 L893.0 364.5 L896.8 363.2 L900.5 364.0 L908.0 369.5 L914.2 364.5 L928.0 364.5 L931.8 365.5 L939.2 365.5 L944.2 370.0 L948.0 372.5 L953.0 368.8 L956.8 365.5 L961.8 365.5 L966.8 367.5 L973.5 368.8" stroke="#e020e0" stroke-width="0.9" fill="none" stroke-linejoin="round"/>
<path d="M314.7 387.0V443.0M341.0 387.0V443.0M367.2 387.0V443.0M393.5 387.0V443.0M419.8 387.0V443.0M446.0 387.0V443.0M472.3 387.0V443.0M498.6 387.0V443.0M524.8 387.0V443.0M551.1 387.0V443.0M577.3 387.0V443.0M603.6 387.0V443.0M629.9 387.0V443.0M656.1 387.0V443.0M682.4 387.0V443.0M708.7 387.0V443.0M734.9 387.0V443.0M761.2 387.0V443.0M787.5 387.0V443.0M813.7 387.0V443.0M840.0 387.0V443.0M866.3 387.0V443.0M892.5 387.0V443.0M918.8 387.0V443.0M945.1 387.0V443.0M971.3 387.0V443.0M997.6 387.0V443.0M314.0 398.2H998.0M314.0 426.2H998.0" stroke="#5a5a5a" stroke-width="0.85" fill="none"/>
<clipPath id="c5"><path d="M315.0 443.0 L315.0 423.0 L325.0 422.0 L335.0 421.0 L347.5 419.0 L360.0 418.8 L372.5 419.0 L385.0 418.0 L397.5 417.0 L410.0 416.0 L422.5 415.0 L430.0 413.5 L435.0 412.0 L438.8 409.5 L443.8 407.5 L450.0 406.8 L456.2 408.0 L461.2 410.5 L466.2 415.0 L472.5 416.5 L480.0 417.0 L483.8 418.0 L490.0 417.0 L497.5 415.8 L505.0 415.0 L510.0 416.0 L517.5 417.0 L525.0 416.2 L530.0 415.0 L540.0 415.0 L550.0 415.0 L557.5 416.0 L566.0 415.0 L576.0 413.5 L586.0 411.5 L598.5 410.0 L611.0 408.0 L616.0 405.0 L621.0 404.0 L628.5 405.5 L636.0 406.5 L646.0 407.5 L656.0 409.0 L666.0 411.2 L676.0 412.0 L686.0 413.0 L696.0 415.0 L706.0 415.5 L716.0 415.5 L726.0 416.0 L736.0 415.0 L746.0 416.5 L753.5 416.8 L763.5 415.5 L768.0 416.5 L778.0 418.0 L788.0 417.0 L798.0 415.5 L805.5 410.5 L810.5 408.0 L816.8 407.0 L821.8 409.5 L828.0 414.5 L838.0 415.0 L848.0 416.2 L858.0 417.5 L868.0 419.0 L878.0 419.5 L888.0 421.0 L898.0 421.5 L908.0 422.0 L918.0 423.0 L928.0 423.0 L938.0 423.0 L948.0 423.0 L958.0 424.0 L968.0 424.0 L973.5 424.0 L973.5 443.0 Z"/></clipPath>
<path d="M315.0 443.0 L315.0 423.0 L325.0 422.0 L335.0 421.0 L347.5 419.0 L360.0 418.8 L372.5 419.0 L385.0 418.0 L397.5 417.0 L410.0 416.0 L422.5 415.0 L430.0 413.5 L435.0 412.0 L438.8 409.5 L443.8 407.5 L450.0 406.8 L456.2 408.0 L461.2 410.5 L466.2 415.0 L472.5 416.5 L480.0 417.0 L483.8 418.0 L490.0 417.0 L497.5 415.8 L505.0 415.0 L510.0 416.0 L517.5 417.0 L525.0 416.2 L530.0 415.0 L540.0 415.0 L550.0 415.0 L557.5 416.0 L566.0 415.0 L576.0 413.5 L586.0 411.5 L598.5 410.0 L611.0 408.0 L616.0 405.0 L621.0 404.0 L628.5 405.5 L636.0 406.5 L646.0 407.5 L656.0 409.0 L666.0 411.2 L676.0 412.0 L686.0 413.0 L696.0 415.0 L706.0 415.5 L716.0 415.5 L726.0 416.0 L736.0 415.0 L746.0 416.5 L753.5 416.8 L763.5 415.5 L768.0 416.5 L778.0 418.0 L788.0 417.0 L798.0 415.5 L805.5 410.5 L810.5 408.0 L816.8 407.0 L821.8 409.5 L828.0 414.5 L838.0 415.0 L848.0 416.2 L858.0 417.5 L868.0 419.0 L878.0 419.5 L888.0 421.0 L898.0 421.5 L908.0 422.0 L918.0 423.0 L928.0 423.0 L938.0 423.0 L948.0 423.0 L958.0 424.0 L968.0 424.0 L973.5 424.0 L973.5 443.0 Z" fill="#7f3f00"/>
<rect clip-path="url(#c5)" x="383.8" y="387.0" width="1.2" height="56.0" fill="#ff8000"/>
<rect clip-path="url(#c5)" x="433.2" y="387.0" width="4.8" height="56.0" fill="#ff8000"/>
<rect clip-path="url(#c5)" x="465.0" y="387.0" width="14.0" height="56.0" fill="#ff8000"/>
<rect clip-path="url(#c5)" x="482.5" y="387.0" width="1.8" height="56.0" fill="#ff8000"/>
<rect clip-path="url(#c5)" x="633.5" y="387.0" width="7.5" height="56.0" fill="#ff8000"/>
<rect clip-path="url(#c5)" x="660.0" y="387.0" width="9.0" height="56.0" fill="#ff8000"/>
<rect clip-path="url(#c5)" x="683.5" y="387.0" width="5.5" height="56.0" fill="#ff8000"/>
<rect clip-path="url(#c5)" x="708.0" y="387.0" width="3.0" height="56.0" fill="#ff8000"/>
<rect clip-path="url(#c5)" x="727.0" y="387.0" width="2.0" height="56.0" fill="#ff8000"/>
<rect clip-path="url(#c5)" x="828.0" y="387.0" width="10.5" height="56.0" fill="#ff8000"/>
<rect clip-path="url(#c5)" x="846.0" y="387.0" width="9.0" height="56.0" fill="#ff8000"/>
<rect clip-path="url(#c5)" x="874.0" y="387.0" width="12.0" height="56.0" fill="#ff8000"/>
<rect clip-path="url(#c5)" x="900.5" y="387.0" width="7.5" height="56.0" fill="#ff8000"/>
<rect clip-path="url(#c5)" x="911.0" y="387.0" width="4.0" height="56.0" fill="#ff8000"/>
<rect clip-path="url(#c5)" x="933.0" y="387.0" width="1.0" height="56.0" fill="#ff8000"/>
<rect clip-path="url(#c5)" x="936.0" y="387.0" width="10.0" height="56.0" fill="#ff8000"/>
<rect clip-path="url(#c5)" x="955.0" y="387.0" width="8.5" height="56.0" fill="#ff8000"/>
<rect clip-path="url(#c5)" x="969.5" y="387.0" width="4.0" height="56.0" fill="#ff8000"/>
<rect clip-path="url(#c5)" x="433.0" y="387.0" width="1.0" height="56.0" fill="#e00000"/>
<rect clip-path="url(#c5)" x="636.0" y="387.0" width="2.5" height="56.0" fill="#e00000"/>
<rect clip-path="url(#c5)" x="713.0" y="387.0" width="0.8" height="56.0" fill="#e00000"/>
<rect clip-path="url(#c5)" x="852.0" y="387.0" width="2.0" height="56.0" fill="#e00000"/>
<rect clip-path="url(#c5)" x="901.0" y="387.0" width="2.5" height="56.0" fill="#e00000"/>
<rect clip-path="url(#c5)" x="937.0" y="387.0" width="3.0" height="56.0" fill="#e00000"/>
<rect clip-path="url(#c5)" x="960.5" y="387.0" width="2.0" height="56.0" fill="#e00000"/>
<rect clip-path="url(#c5)" x="970.0" y="387.0" width="2.5" height="56.0" fill="#e00000"/>
<path d="M314.0 442.8H973.5" stroke="#e04040" stroke-width="0.8"/>
<path d="M314.7 448.0V504.0M341.0 448.0V504.0M367.2 448.0V504.0M393.5 448.0V504.0M419.8 448.0V504.0M446.0 448.0V504.0M472.3 448.0V504.0M498.6 448.0V504.0M524.8 448.0V504.0M551.1 448.0V504.0M577.3 448.0V504.0M603.6 448.0V504.0M629.9 448.0V504.0M656.1 448.0V504.0M682.4 448.0V504.0M708.7 448.0V504.0M734.9 448.0V504.0M761.2 448.0V504.0M787.5 448.0V504.0M813.7 448.0V504.0M840.0 448.0V504.0M866.3 448.0V504.0M892.5 448.0V504.0M918.8 448.0V504.0M945.1 448.0V504.0M971.3 448.0V504.0M997.6 448.0V504.0M314.0 459.2H998.0M314.0 477.9H998.0M314.0 496.5H998.0" stroke="#5a5a5a" stroke-width="0.85" fill="none"/>
<path d="M315.0 477.9 L315.0 477.8 L317.5 483.8 L320.5 490.0 L323.0 493.5 L326.2 490.0 L331.2 488.0 L337.5 486.0 L345.0 483.5 L352.5 480.5 L358.8 478.0 L362.5 476.2 L365.5 478.8 L368.8 482.5 L372.5 483.8 L376.2 481.2 L380.0 478.8 L383.0 479.5 L385.5 483.0 L388.0 485.0 L390.5 481.2 L393.8 475.0 L397.5 473.0 L402.5 474.0 L407.5 473.8 L412.5 471.0 L415.0 472.5 L417.5 475.5 L421.2 474.0 L426.2 472.0 L429.5 474.5 L432.5 472.5 L435.0 470.0 L437.0 473.8 L438.5 481.2 L440.0 483.8 L441.5 477.5 L443.0 465.0 L445.0 453.8 L447.5 449.0 L450.0 452.5 L453.8 461.2 L457.5 471.2 L460.0 477.8 L463.8 486.2 L467.5 493.8 L471.2 501.2 L473.8 504.0 L475.5 500.0 L478.0 490.0 L480.5 481.2 L483.0 480.0 L486.2 482.5 L489.5 478.8 L492.5 474.5 L497.5 472.5 L501.2 470.0 L504.5 466.2 L507.0 468.8 L509.5 475.0 L512.0 478.8 L514.5 480.5 L517.0 478.8 L519.0 476.2 L520.5 480.0 L522.5 486.2 L524.0 488.8 L526.0 482.5 L528.8 475.0 L532.0 470.0 L535.0 468.8 L538.0 472.5 L542.5 475.5 L547.5 475.0 L550.5 475.0 L553.0 480.0 L556.0 485.5 L558.8 481.2 L562.5 477.0 L566.0 475.5 L571.0 473.8 L575.5 471.0 L579.8 473.0 L584.8 471.2 L591.0 468.0 L597.2 469.0 L603.5 470.5 L609.8 469.0 L616.0 468.0 L619.8 465.0 L623.0 457.5 L625.0 455.0 L627.0 462.5 L629.0 475.0 L631.0 480.0 L633.5 484.5 L636.0 487.0 L639.0 481.2 L640.5 478.8 L643.0 484.5 L647.2 482.0 L652.2 480.5 L657.2 481.5 L661.0 482.5 L663.0 481.2 L665.0 490.0 L667.0 497.0 L668.5 498.8 L670.5 492.5 L673.5 483.8 L677.2 478.8 L681.0 477.8 L684.8 480.0 L688.0 486.2 L690.5 489.5 L693.5 485.0 L697.2 482.0 L702.2 480.5 L707.2 481.2 L711.0 483.0 L714.0 485.5 L716.5 482.5 L719.8 478.0 L723.5 477.0 L727.2 478.8 L730.5 483.8 L733.0 487.0 L736.0 481.2 L739.8 478.8 L744.8 478.8 L748.0 481.2 L751.0 485.0 L753.5 486.2 L756.0 481.2 L758.5 475.0 L761.0 467.5 L764.0 463.0 L766.5 466.2 L769.8 472.5 L773.5 477.5 L776.5 483.8 L779.0 487.0 L782.2 484.5 L786.0 481.2 L789.8 477.5 L793.5 473.8 L797.2 473.0 L801.0 476.2 L803.5 478.8 L805.5 472.5 L807.5 462.5 L809.8 453.8 L811.5 451.2 L814.0 454.5 L817.2 458.8 L819.8 465.0 L822.0 468.8 L822.0 472.5 L824.2 477.8 L826.8 486.2 L830.0 496.2 L833.5 502.0 L836.8 497.5 L840.0 487.5 L843.0 482.5 L846.8 477.5 L849.2 480.0 L851.8 486.2 L854.5 490.0 L857.0 485.0 L860.0 481.2 L864.2 480.5 L868.0 483.8 L870.5 484.5 L874.2 481.2 L878.0 482.5 L881.8 480.0 L884.2 483.8 L887.5 488.8 L890.0 483.8 L893.0 480.0 L898.0 480.5 L903.0 478.0 L907.5 475.5 L911.0 478.8 L914.2 481.2 L917.5 485.5 L920.5 482.5 L924.2 479.5 L929.2 480.0 L933.5 483.8 L936.8 481.2 L940.0 475.5 L942.5 477.5 L945.0 482.5 L948.5 488.8 L951.8 483.8 L955.0 480.0 L958.5 479.5 L961.8 482.0 L965.5 481.2 L969.2 482.5 L972.5 486.2 L973.5 486.2 L973.5 477.9 Z" fill="#ff0000" stroke="#ff0000" stroke-width="0.5"/>
<path d="M311 59.3H314" stroke="#000" stroke-width="0.8"/>
<text x="310.3" y="61.5" text-anchor="end" class="ax">600</text>
<path d="M311 71.0H314" stroke="#000" stroke-width="0.8"/>
<text x="310.3" y="73.2" text-anchor="end" class="ax">550</text>
<path d="M311 82.7H314" stroke="#000" stroke-width="0.8"/>
<text x="310.3" y="84.9" text-anchor="end" class="ax">500</text>
<path d="M311 94.4H314" stroke="#000" stroke-width="0.8"/>
<text x="310.3" y="96.6" text-anchor="end" class="ax">450</text>
<path d="M311 106.1H314" stroke="#000" stroke-width="0.8"/>
<text x="310.3" y="108.3" text-anchor="end" class="ax">400</text>
<path d="M311 117.8H314" stroke="#000" stroke-width="0.8"/>
<text x="310.3" y="120.0" text-anchor="end" class="ax">350</text>
<path d="M311 129.5H314" stroke="#000" stroke-width="0.8"/>
<text x="310.3" y="131.7" text-anchor="end" class="ax">300</text>
<path d="M311 141.2H314" stroke="#000" stroke-width="0.8"/>
<text x="310.3" y="143.4" text-anchor="end" class="ax">250</text>
<path d="M311 152.9H314" stroke="#000" stroke-width="0.8"/>
<text x="310.3" y="155.1" text-anchor="end" class="ax">200</text>
<path d="M311 164.6H314" stroke="#000" stroke-width="0.8"/>
<text x="310.3" y="166.8" text-anchor="end" class="ax">150</text>
<path d="M311 176.3H314" stroke="#000" stroke-width="0.8"/>
<text x="310.3" y="178.5" text-anchor="end" class="ax">100</text>
<path d="M311 188.0H314" stroke="#000" stroke-width="0.8"/>
<text x="310.3" y="190.2" text-anchor="end" class="ax">50</text>
<path d="M311 199.7H314" stroke="#000" stroke-width="0.8"/>
<text x="310.3" y="201.9" text-anchor="end" class="ax">0</text>
<text transform="translate(297.6 129.5) rotate(-90)" text-anchor="middle" class="at">Potnz (W)</text>
<path d="M311 204.5H314" stroke="#000" stroke-width="0.8"/>
<text x="310.3" y="206.7" text-anchor="end" class="ax">50</text>
<path d="M311 232.5H314" stroke="#000" stroke-width="0.8"/>
<text x="310.3" y="234.7" text-anchor="end" class="ax">25</text>
<path d="M311 260.5H314" stroke="#000" stroke-width="0.8"/>
<text x="310.3" y="262.7" text-anchor="end" class="ax">0</text>
<text transform="translate(300.4 232.5) rotate(-90)" text-anchor="middle" class="at">Veloc (km/h)</text>
<path d="M311 265.8H314" stroke="#000" stroke-width="0.8"/>
<text x="310.3" y="267.9" text-anchor="end" class="ax">100</text>
<path d="M311 281.3H314" stroke="#000" stroke-width="0.8"/>
<text x="310.3" y="283.5" text-anchor="end" class="ax">75</text>
<path d="M311 296.9H314" stroke="#000" stroke-width="0.8"/>
<text x="310.3" y="299.1" text-anchor="end" class="ax">50</text>
<path d="M311 312.4H314" stroke="#000" stroke-width="0.8"/>
<text x="310.3" y="314.6" text-anchor="end" class="ax">25</text>
<path d="M311 321.8H314" stroke="#000" stroke-width="0.8"/>
<text x="310.3" y="323.9" text-anchor="end" class="ax">10</text>
<text transform="translate(297.6 293.8) rotate(-90)" text-anchor="middle" class="at">Cad (rpm)</text>
<path d="M311 326.5H314" stroke="#000" stroke-width="0.8"/>
<text x="310.3" y="328.7" text-anchor="end" class="ax">160</text>
<path d="M311 342.5H314" stroke="#000" stroke-width="0.8"/>
<text x="310.3" y="344.7" text-anchor="end" class="ax">140</text>
<path d="M311 358.5H314" stroke="#000" stroke-width="0.8"/>
<text x="310.3" y="360.7" text-anchor="end" class="ax">120</text>
<path d="M311 374.5H314" stroke="#000" stroke-width="0.8"/>
<text x="310.3" y="376.7" text-anchor="end" class="ax">100</text>
<path d="M311 382.5H314" stroke="#000" stroke-width="0.8"/>
<text x="310.3" y="384.7" text-anchor="end" class="ax">90</text>
<text transform="translate(297.6 354.5) rotate(-90)" text-anchor="middle" class="at">Heart (bpm)</text>
<path d="M311 387.0H314" stroke="#000" stroke-width="0.8"/>
<text x="310.3" y="389.2" text-anchor="end" class="ax">360</text>
<path d="M311 398.2H314" stroke="#000" stroke-width="0.8"/>
<text x="310.3" y="400.4" text-anchor="end" class="ax">350</text>
<path d="M311 426.2H314" stroke="#000" stroke-width="0.8"/>
<text x="310.3" y="428.4" text-anchor="end" class="ax">325</text>
<path d="M311 443.0H314" stroke="#000" stroke-width="0.8"/>
<text x="310.3" y="445.2" text-anchor="end" class="ax">310</text>
<text transform="translate(297.6 415.0) rotate(-90)" text-anchor="middle" class="at">Altitu (m)</text>
<path d="M311 448.0H314" stroke="#000" stroke-width="0.8"/>
<text x="310.3" y="450.2" text-anchor="end" class="ax">8</text>
<path d="M311 459.2H314" stroke="#000" stroke-width="0.8"/>
<text x="310.3" y="461.4" text-anchor="end" class="ax">5</text>
<path d="M311 477.9H314" stroke="#000" stroke-width="0.8"/>
<text x="310.3" y="480.1" text-anchor="end" class="ax">0</text>
<path d="M311 496.5H314" stroke="#000" stroke-width="0.8"/>
<path d="M311 504.0H314" stroke="#000" stroke-width="0.8"/>
<text x="310.3" y="506.2" text-anchor="end" class="ax">-7</text>
<text transform="translate(300.4 476.0) rotate(-90)" text-anchor="middle" class="at">Inclin (%)</text>
<text x="316.5" y="210.8" class="lg" fill="#fff">Ruota <tspan fill="#1585d0">Vento</tspan></text>
<text x="316.5" y="271.7" class="lg" fill="#ff8000">In gruppo</text>
<text x="316.5" y="393.4" class="lg" fill="#ff8000">Lasciare che la bici proceda, senza pedalare <tspan fill="#f00">Frenata</tspan></text>
<path d="M314.7 519.6V522.8" stroke="#111" stroke-width="0.9"/>
<text x="314.7" y="529.3" text-anchor="middle" class="xl">00:00</text>
<path d="M341.0 519.6V522.8" stroke="#111" stroke-width="0.9"/>
<text x="341.0" y="529.3" text-anchor="middle" class="xl">00:00</text>
<path d="M367.2 519.6V522.8" stroke="#111" stroke-width="0.9"/>
<text x="367.2" y="529.3" text-anchor="middle" class="xl">00:01</text>
<path d="M393.5 519.6V522.8" stroke="#111" stroke-width="0.9"/>
<text x="393.5" y="529.3" text-anchor="middle" class="xl">00:01</text>
<path d="M419.8 519.6V522.8" stroke="#111" stroke-width="0.9"/>
<text x="419.8" y="529.3" text-anchor="middle" class="xl">00:02</text>
<path d="M446.0 519.6V522.8" stroke="#111" stroke-width="0.9"/>
<text x="446.0" y="529.3" text-anchor="middle" class="xl">00:02</text>
<path d="M472.3 519.6V522.8" stroke="#111" stroke-width="0.9"/>
<text x="472.3" y="529.3" text-anchor="middle" class="xl">00:03</text>
<path d="M498.6 519.6V522.8" stroke="#111" stroke-width="0.9"/>
<text x="498.6" y="529.3" text-anchor="middle" class="xl">00:03</text>
<path d="M524.8 519.6V522.8" stroke="#111" stroke-width="0.9"/>
<text x="524.8" y="529.3" text-anchor="middle" class="xl">00:04</text>
<path d="M551.1 519.6V522.8" stroke="#111" stroke-width="0.9"/>
<text x="551.1" y="529.3" text-anchor="middle" class="xl">00:04</text>
<path d="M577.3 519.6V522.8" stroke="#111" stroke-width="0.9"/>
<text x="577.3" y="529.3" text-anchor="middle" class="xl">00:05</text>
<path d="M603.6 519.6V522.8" stroke="#111" stroke-width="0.9"/>
<text x="603.6" y="529.3" text-anchor="middle" class="xl">00:05</text>
<path d="M629.9 519.6V522.8" stroke="#111" stroke-width="0.9"/>
<text x="629.9" y="529.3" text-anchor="middle" class="xl">00:06</text>
<path d="M656.1 519.6V522.8" stroke="#111" stroke-width="0.9"/>
<text x="656.1" y="529.3" text-anchor="middle" class="xl">00:06</text>
<path d="M682.4 519.6V522.8" stroke="#111" stroke-width="0.9"/>
<text x="682.4" y="529.3" text-anchor="middle" class="xl">00:07</text>
<path d="M708.7 519.6V522.8" stroke="#111" stroke-width="0.9"/>
<text x="708.7" y="529.3" text-anchor="middle" class="xl">00:07</text>
<path d="M734.9 519.6V522.8" stroke="#111" stroke-width="0.9"/>
<text x="734.9" y="529.3" text-anchor="middle" class="xl">00:08</text>
<path d="M761.2 519.6V522.8" stroke="#111" stroke-width="0.9"/>
<text x="761.2" y="529.3" text-anchor="middle" class="xl">00:08</text>
<path d="M787.5 519.6V522.8" stroke="#111" stroke-width="0.9"/>
<text x="787.5" y="529.3" text-anchor="middle" class="xl">00:09</text>
<path d="M813.7 519.6V522.8" stroke="#111" stroke-width="0.9"/>
<text x="813.7" y="529.3" text-anchor="middle" class="xl">00:09</text>
<path d="M840.0 519.6V522.8" stroke="#111" stroke-width="0.9"/>
<text x="840.0" y="529.3" text-anchor="middle" class="xl">00:10</text>
<path d="M866.3 519.6V522.8" stroke="#111" stroke-width="0.9"/>
<text x="866.3" y="529.3" text-anchor="middle" class="xl">00:10</text>
<path d="M892.5 519.6V522.8" stroke="#111" stroke-width="0.9"/>
<text x="892.5" y="529.3" text-anchor="middle" class="xl">00:11</text>
<path d="M918.8 519.6V522.8" stroke="#111" stroke-width="0.9"/>
<text x="918.8" y="529.3" text-anchor="middle" class="xl">00:11</text>
<path d="M945.1 519.6V522.8" stroke="#111" stroke-width="0.9"/>
<text x="945.1" y="529.3" text-anchor="middle" class="xl">00:12</text>
<path d="M971.3 519.6V522.8" stroke="#111" stroke-width="0.9"/>
<text x="971.3" y="529.3" text-anchor="middle" class="xl">00:12</text>
<path d="M997.6 519.6V522.8" stroke="#111" stroke-width="0.9"/>
<text x="997.6" y="529.3" text-anchor="middle" class="xl">00:13</text>
<text x="654.5" y="538.3" text-anchor="middle" class="ax">Tempo</text>
</svg>
<!-- status bar -->
<div class="a" style="left:265.4px;top:541.4px;width:756.6px;height:0.7px;background:#a8a8a8"></div>
<div class="a" style="left:265.4px;top:542.1px;width:756.6px;height:12.4px;background:#f0f0f0"></div>
<div class="a" style="left:268.8px;top:545.2px;font-size:6.45px;letter-spacing:-0.08px;color:#111;white-space:pre">Profile: giant ocr v03 07/06/2020 Prof# 3; Valore di registrazione = 1 s</div>
<!-- dialog -->
<div class="a" style="left:453px;top:241.8px;width:118px;height:80px;background:#f0f0f0;box-shadow:0 0 0 0.5px #8a8a8a,0 1px 3px rgba(0,0,0,.5)"></div>
<div class="a" style="left:453px;top:241.8px;width:118px;height:16.4px;background:#fff"></div>
<svg class="a" style="left:456.6px;top:244.8px" width="10" height="10" viewBox="0 0 9 10"><path d="M2.4 0.8H8.4L6.8 9H0.6Z" fill="#fff" stroke="#1d5672" stroke-width="1.1"/><path d="M3.6 2.4H6.6L6.2 4.4H5L4.4 7.4H2.6L3.2 4.4H3.2Z" fill="#1d5672"/></svg>
<svg class="a" style="left:559px;top:246px" width="7" height="7" viewBox="0 0 7 7"><path d="M1 1l5 5M6 1l-5 5" stroke="#333" stroke-width="0.7"/></svg>
<div class="a" style="left:459.4px;top:264.3px;font-size:6.5px;letter-spacing:-0.07px;line-height:8px;color:#111;white-space:pre">Trovato nuovo wireless IDs nell'unità.
Ti piacerebbe salvarlo nel tio
corrisponde profilo "giant ocr v03 07/
06/2020 Prof# 3"?</div>
<div class="btn" style="left:467.2px;top:304.4px;width:38.4px;height:10.6px;border:1px solid #0a78d7;font-size:6.5px;line-height:10.4px;text-align:center;overflow:hidden">Ok</div>
<div class="btn" style="left:517.4px;top:304.4px;width:38.4px;height:10.6px;font-size:6.5px;line-height:10px;text-align:center;border-color:#adadad">Annulla</div>
<!-- taskbar -->
<div class="a" style="left:0;top:554.4px;width:1022px;height:0.9px;background:linear-gradient(90deg,#3a6a3a,#4a7a3a 22%,#c0b040 25%,#a03030 33%,#8a8a8a 45%,#a03030 55%,#c0a040 62%,#3a5a8a 70%,#a03030 85%,#4a8a4a)"></div>
<div class="tb"></div>
<div class="a" style="left:25.8px;top:555.3px;width:182.8px;height:20.3px;background:#f3f3f3"></div>
<div class="a" style="left:208.6px;top:555.1px;width:26px;height:20.5px;background:#262626"></div>
<div class="a" style="left:496.6px;top:555.1px;width:26.4px;height:20.5px;background:#3a3a3a"></div>
<div class="a" style="left:498.4px;top:574.6px;width:22.8px;height:1px;background:#d8d0c8"></div>
<div class="a" style="left:47px;top:560.6px;font-size:8px;letter-spacing:-0.03px;color:#303030;white-space:pre">Scrivi qui per eseguire la ricerca</div>
<svg class="a" style="left:0;top:554.5px" width="1024" height="23" viewBox="0 555 1024 23">
<path d="M8.2 562.6l3.6-0.5v3.5H8.2zM12.4 562l4.6-0.7v4.3h-4.6zM8.2 566.2h3.6v3.5l-3.6-0.5zM12.4 566.2h4.6v4.3l-4.6-0.7z" fill="#fff"/>
<circle cx="37.6" cy="565" r="2.6" stroke="#333" stroke-width="0.8" fill="none"/><path d="M35.8 567l-3 3.2" stroke="#333" stroke-width="0.9"/>
<circle cx="221.6" cy="566" r="3.6" stroke="#fff" stroke-width="1.1" fill="none"/>
<path d="M243.6 563h4.800v6.200h-4.800zM242.200 563h7.600M242.200 569.200h7.600M250.600 565.400v1.400" stroke="#fff" stroke-width="1" fill="none"/>
<!-- edge -->
<path d="M270.8 566.8h9.4c0.2-4-2-6-4.8-6-3 0-5.2 2.2-5.2 5.4 0 3.4 2.4 5.4 5.4 5.4 1.6 0 3-0.4 4-1v-2.2c-1 0.7-2.2 1-3.6 1-1.8 0-3-1-3.2-2.6zM273 565c0.2-1.400 1.200-2.200 2.400-2.200 1.300 0 2.200 0.800 2.300 2.200z" fill="#0f7fd8" fill-rule="evenodd"/>
<!-- home -->
<path d="M300.6 560.6l-6 5.2h1.600v4.800h3.200v-3.200h2.400v3.200h3.200v-4.800h1.600z" fill="#fff"/>
<!-- outlook -->
<rect x="325" y="561" width="7.6" height="9.600" fill="#1a6fc4"/><rect x="321.400" y="562.400" width="6.400" height="7" fill="#0a5aa8"/><circle cx="324.600" cy="565.900" r="1.700" stroke="#fff" stroke-width="0.9" fill="none"/><path d="M328 563h4.600v2.400h-4.600z" fill="#58a8f0"/>
<!-- store -->
<path d="M348.200 563.200h9.200v7.600h-9.200z" fill="#fff"/><path d="M350.800 563.200v-1.400c0-1.600 4-1.600 4 0v1.400" stroke="#fff" stroke-width="0.8" fill="none"/><rect x="350.400" y="564.800" width="2.100" height="2.100" fill="#f25022"/><rect x="353" y="564.800" width="2.100" height="2.100" fill="#7fba00"/><rect x="350.400" y="567.400" width="2.100" height="2.100" fill="#00a4ef"/><rect x="353" y="567.400" width="2.100" height="2.100" fill="#ffb900"/>
<!-- explorer -->
<path d="M374.400 562h3.400l1 1.200h5.600v7.600h-10z" fill="#f4c43c"/><path d="M374.400 564.600h10v6.200h-10z" fill="#fcd860"/><rect x="376.600" y="567.400" width="5.600" height="3.400" fill="#3a8ad8"/><rect x="377.800" y="569" width="3.200" height="1.800" fill="#fcd860"/>
<!-- B -->
<circle cx="405.300" cy="566" r="5.500" fill="#fff"/><circle cx="405.300" cy="566" r="4.700" fill="none" stroke="#1a1a50" stroke-width="0.600"/><text x="403.100" y="568.300" font-family="Liberation Serif,serif" font-weight="bold" font-size="6.600" fill="#1a1a50">B</text>
<!-- IE -->
<g transform="translate(432 566) scale(1.2) translate(-432 -566)"><path d="M427.800 566.800h8.400c0.200-3.600-1.800-5.600-4.400-5.600-2.800 0-4.800 2-4.800 5 0 3.200 2.200 5 5 5 1.500 0 2.800-0.400 3.800-1v-2c-1 0.600-2 0.900-3.300 0.900-1.700 0-2.900-0.900-3.100-2.300zM429.800 565.200c0.200-1.300 1.100-2 2.200-2 1.200 0 2 0.700 2.100 2z" fill="#2aa0f0" fill-rule="evenodd"/><path d="M426.400 570.800c-1.200-3 5-10.400 10.800-9.600" stroke="#f0c030" stroke-width="0.9" fill="none"/></g>
<!-- firefox -->
<g transform="translate(457.4 566) scale(1.25) translate(-457.4 -566)">
<circle cx="457.400" cy="566.200" r="4.800" fill="#ff8a1a"/><circle cx="457.900" cy="566.700" r="2.700" fill="#7a3ad0"/><path d="M453 563.600c1.400-2.600 5-3.800 7.600-2.200-2-0.200-3.400 0.600-4 2 1.600-0.400 3 0.400 3.600 1.800-2.400-1-5.200 0.200-5.400 2.800-1.400-1.200-2.200-2.800-1.800-4.400z" fill="#ffc21a"/><path d="M452.800 565c0 4 3.400 6.200 6.600 5.600-3.400-0.200-5.400-2.600-5.200-5.400z" fill="#e8304a"/></g>
<!-- chrome -->
<g transform="translate(483.3 566) scale(1.25) translate(-483.3 -566)">
<circle cx="483.300" cy="566" r="4.800" fill="#e8453c"/><path d="M483.300 566l-4.200-2.400a4.800 4.800 0 0 0 2 7l2.200-4.600z" fill="#2ea04e"/><path d="M483.300 566l2.200 4.600-4.400 0c3 1 7-1 7-5.200 0-0.800-0.200-1.600-0.500-2.200h-4.300z" fill="#fbc116"/><circle cx="483.300" cy="566" r="2.200" fill="#fff"/><circle cx="483.300" cy="566" r="1.700" fill="#3a7cf0"/></g>
<!-- app -->
<path d="M505.800 559.600h10.800l-2.600 12.800h-10.800z" fill="#14506a"/><path d="M509.600 561.400l3.400-0.400-0.400 2.200-3.400 0.400zM507.400 564.800l5-0.600-0.900 4.200 1.800-0.200-0.300 1.600-6.400 0.800 0.300-1.600 1.800-0.200 0.500-2.400-2 0.200z" fill="#fff"/>
<!-- tray -->
<circle cx="881.400" cy="565.600" r="5.100" fill="#2f9be6" stroke="#e8f4fc" stroke-width="0.9"/><text x="879.100" y="568.500" font-family="Liberation Sans,sans-serif" font-weight="bold" font-size="8" fill="#fff">?</text><circle cx="886.200" cy="568.600" r="2.100" fill="#f0b030"/>
<path d="M893.600 567.400l3-3 3 3" stroke="#fff" stroke-width="0.8" fill="none"/>
<path d="M907.600 568.600l5-5.600v5.600zM908.600 565.600l2 2M908 567.400l1.600 1.600" stroke="#ddd" stroke-width="0.7" fill="none"/>
<path d="M919.400 564.600h1.600l2-1.800v6.200l-2-1.800h-1.600zM924.400 564.200c0.800 1 0.800 2.600 0 3.600M925.800 563.200c1.400 1.600 1.400 4 0 5.600" stroke="#ddd" stroke-width="0.7" fill="none"/>
<rect x="932" y="563.800" width="7" height="4.600" fill="#e8e8e8"/><rect x="931" y="562.400" width="3" height="2" fill="#e8e8e8"/><path d="M933 569.400h5" stroke="#ddd" stroke-width="0.7"/>
<path d="M946.400 568.600a1.800 1.800 0 1 1-0.100 0zM952.400 562.600a1.800 1.800 0 1 1-0.100 0zM947.600 568l4-3.800" stroke="#ddd" stroke-width="0.9" fill="none"/>
<path d="M1002.400 562.200h8v5.400h-5l-1.400 1.400v-1.400h-1.600z" fill="#fff"/><path d="M1003.600 564h5.600M1003.600 565.800h5.600" stroke="#101010" stroke-width="0.5"/><circle cx="1010.600" cy="569.800" r="3.200" fill="#101010" stroke="#ddd" stroke-width="0.6"/><text x="1008.400" y="571.400" font-family="Liberation Sans,sans-serif" font-size="4.200" fill="#fff">15</text>
</svg>
<div class="tray" style="left:957px;top:557px;width:40px">18:57</div>
<div class="tray" style="left:957px;top:566.5px;width:40px">21/06/2020</div>
<div class="a" style="left:1021px;top:555px;width:1px;height:21px;background:#4a4a4a"></div>
<div class="a" style="left:0;top:575.6px;width:1024px;height:2.4px;background:#fff"></div>
</body></html>
